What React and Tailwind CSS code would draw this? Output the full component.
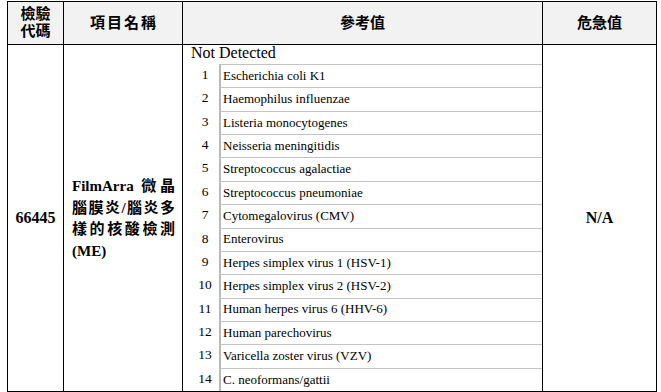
const items = [
  'Escherichia coli K1',
  'Haemophilus influenzae',
  'Listeria monocytogenes',
  'Neisseria meningitidis',
  'Streptococcus agalactiae',
  'Streptococcus pneumoniae',
  'Cytomegalovirus (CMV)',
  'Enterovirus',
  'Herpes simplex virus 1 (HSV-1)',
  'Herpes simplex virus 2 (HSV-2)',
  'Human herpes virus 6 (HHV-6)',
  'Human parechovirus',
  'Varicella zoster virus (VZV)',
  'C. neoformans/gattii',
];

const serif = "font-['Liberation_Serif','Noto_Sans_CJK_TC',serif]";

function App() {
  return (
    <div className={`w-[661px] h-[392px] bg-white text-black pt-[1px] pl-[7px] ${serif}`}>
      <div className="w-[650px] border-l border-t border-black">
        {/* Header */}
        <div className="grid grid-cols-[56px_119px_360px_114px] h-[43px] bg-[#f2f2f2] font-bold text-[15px]">
          <div className="border-r border-b border-black flex items-center justify-center text-center leading-[17px]">
            檢驗<br />代碼
          </div>
          <div className="border-r border-b border-black flex items-center justify-center tracking-[2px] pl-[2px]">
            項目名稱
          </div>
          <div className="border-r border-b border-black flex items-center justify-center">
            參考值
          </div>
          <div className="border-r border-b border-black flex items-center justify-center">
            危急值
          </div>
        </div>

        {/* Body */}
        <div className="grid grid-cols-[56px_119px_360px_114px] h-[347px]">
          <div className="border-r border-b border-black flex items-center justify-center font-bold text-[16px]">
            66445
          </div>
          <div className="border-r border-b border-black flex items-center pl-[8px] pr-[7px] font-bold text-[15px]">
            <div className="w-full leading-[21.5px] pt-[2px]">
              <div className="[text-align-last:justify] text-justify">FilmArra 微晶</div>
              <div className="[text-align-last:justify] text-justify">腦膜炎/腦炎多</div>
              <div className="[text-align-last:justify] text-justify">樣的核酸檢測</div>
              <div>(ME)</div>
            </div>
          </div>
          <div className="border-r border-b border-black flex flex-col pl-[8px]">
            <div className="h-[19px] text-[16px] leading-[15px]">Not Detected</div>
            <div className="flex-1 grid grid-rows-[repeat(14,minmax(0,1fr))] text-[13px]">
              {items.map((name, i) => (
                <div key={name} className="grid grid-cols-[28px_1fr]">
                  <div className="flex items-center justify-center pb-[1px] text-[13.5px]">{i + 1}</div>
                  <div className="border-l-2 border-t border-l-[#b8b8b8] border-t-[#c4c4c4] flex items-center pl-[2px] pb-[1px]">
                    {name}
                  </div>
                </div>
              ))}
            </div>
          </div>
          <div className="border-r border-b border-black flex items-center justify-center font-bold text-[16px]">
            N/A
          </div>
        </div>
      </div>
    </div>
  );
}

export default App;
